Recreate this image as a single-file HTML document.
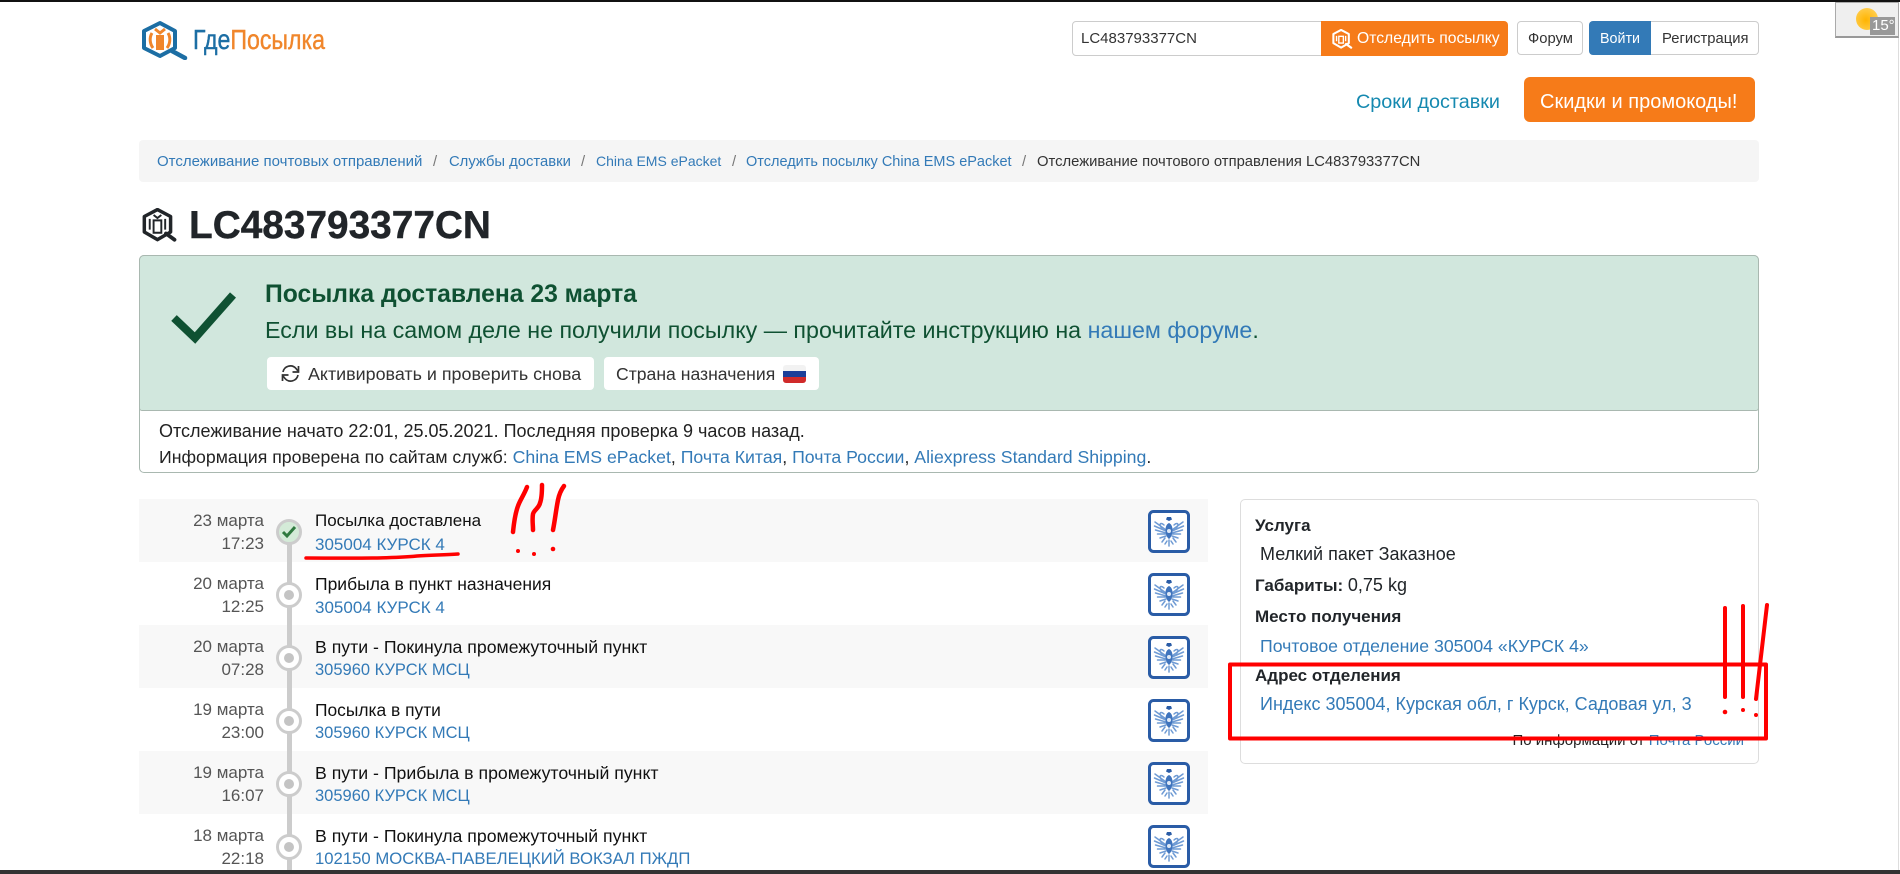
<!DOCTYPE html>
<html lang="ru"><head><meta charset="utf-8"><title>LC483793377CN</title>
<style>
html,body{margin:0;padding:0;background:#fff}
body{position:relative;width:1900px;height:874px;overflow:hidden;font-family:"Liberation Sans",Arial,sans-serif;color:#212529;font-size:17px}
a{color:#337ab7;text-decoration:none}
.t{position:absolute;white-space:nowrap;line-height:20px}
.b{position:absolute;box-sizing:border-box}
.row{position:absolute;left:139px;width:1069px;height:63px}
.d{position:absolute;left:144px;white-space:nowrap;line-height:20px;color:#555;width:120px;text-align:right}
.c{position:absolute;left:276px;width:26px;height:26px;box-sizing:border-box;border:3px solid #ccc;border-radius:50%;background:#fff}
.c i{position:absolute;left:5px;top:5px;width:10px;height:10px;border-radius:50%;background:#c4c4c4}
.eg{position:absolute;left:1148px;width:42px;height:43px}
.bc{font-size:14.8px}
.k{color:#111;font-size:17.700px}
.r{font-size:18px}
.l2{font-size:16.500px}
</style></head><body>
<svg width="0" height="0" style="position:absolute"><defs>
<g id="eagle">
<rect x="1.500" y="1.500" width="39" height="40" rx="4" fill="#fff" stroke="#2a5ca6" stroke-width="3"/>
<g fill="none" stroke="#6f9bd4" stroke-width="1.500" stroke-linecap="round">
<path d="M18 20L7 12M18 21L6.500 16M18 23L7.500 20M18 24L9.500 24M18 26L12 28"/>
<path d="M24 20L35 12M24 21L35.500 16M24 23L34.500 20M24 24L32.500 24M24 26L30 28"/>
<path d="M16 15c-2-2-4-2-4 0l2 4M26 15c2-2 4-2 4 0l-2 4"/>
<path d="M17 28l-3 4M25 28l3 4M19 31l-2 3M23 31l2 3M21 30v6"/>
</g>
<path d="M19 7h4l1 2.500-3 1.500-3-1.500z" fill="#2a5ca6"/>
<path d="M21 13c-2.500 1-3.500 4-3.500 7 0 5 2 8 3.500 9 1.500-1 3.500-4 3.500-9 0-3-1-6-3.500-7z" fill="#3f74bd"/>
<circle cx="21" cy="21" r="2" fill="#dfe9f6"/>
</g>
<g id="box"><path d="M22 2l17 9v20l-17 10L5 31V11z" fill="none" stroke="currentColor" stroke-width="4.500" stroke-linejoin="round"/><path d="M33 33l11 8" stroke="currentColor" stroke-width="5" stroke-linecap="round"/></g>
</defs></svg>

<div class="b" style="left:0;top:0;width:1900px;height:2px;background:#111"></div>

<svg class="b" style="left:139px;top:20px" width="50" height="40" viewBox="0 0 50 40">
<path d="M21 3l15 8v17l-15 8-16-8V11z" fill="none" stroke="#1c6ea4" stroke-width="4" stroke-linejoin="round"/>
<path d="M33 31l13 7" stroke="#1c6ea4" stroke-width="4.500" stroke-linecap="round"/>
<path d="M17 15h8v15h-8z" fill="#f0862b"/><path d="M13 13c-3 5-2 11 1 15M29 13c3 5 2 11-1 15M16 9l5 4 5-4" fill="none" stroke="#f0862b" stroke-width="3"/>
</svg>
<svg class="b" style="left:190px;top:22px" width="140" height="36"><text x="3" y="27" font-size="28" textLength="132" lengthAdjust="spacingAndGlyphs" font-family="Liberation Sans, sans-serif" fill="#1c6ea4" stroke="#1c6ea4" stroke-width=".4">Где<tspan fill="#f0862b" stroke="#f0862b">Посылка</tspan></text></svg>

<div class="b" style="left:1072px;top:21px;width:252px;height:35px;border:1px solid #ccc;border-radius:4px 0 0 4px"></div>
<div class="t" style="left:1081px;top:29px;font-size:15px;color:#333">LC483793377CN</div>
<div class="b" style="left:1321px;top:21px;width:187px;height:35px;background:#f67b19;border-radius:0 4px 4px 0"></div>
<svg class="b" style="left:1331px;top:29px;color:#fff" width="22" height="20" viewBox="0 0 48 44"><use href="#box"/><path d="M17 16h10v15H17zM12 15v12M32 15v12" fill="none" stroke="#fff" stroke-width="3"/></svg>
<div class="t" style="left:1357px;top:29px;font-size:15.700px;color:#fff">Отследить посылку</div>
<div class="b" style="left:1517px;top:21px;width:66px;height:34px;border:1px solid #ccc;border-radius:4px"></div>
<div class="t" style="left:1528px;top:29px;font-size:14.800px;color:#333">Форум</div>
<div class="b" style="left:1589px;top:21px;width:62px;height:34px;background:#337ab7;border-radius:4px 0 0 4px"></div>
<div class="t" style="left:1600px;top:29px;font-size:14.300px;color:#fff">Войти</div>
<div class="b" style="left:1651px;top:21px;width:108px;height:34px;border:1px solid #ccc;border-left:0;border-radius:0 4px 4px 0"></div>
<div class="t" style="left:1662px;top:29px;font-size:14.800px;color:#333">Регистрация</div>

<div class="t" style="left:1356px;top:92px;font-size:19.800px;color:#1589b0">Сроки доставки</div>
<div class="b" style="left:1524px;top:77px;width:231px;height:45px;background:#f67b19;border-radius:6px"></div>
<div class="t" style="left:1540px;top:92px;font-size:20px;color:#fff">Скидки и промокоды!</div>

<div class="b" style="left:1835px;top:2px;width:64px;height:36px;background:#efefef;border:1px solid #aaa;border-bottom:2px solid #999"></div>
<div class="b" style="left:1856px;top:8px;width:22px;height:22px;border-radius:50%;background:radial-gradient(circle at 45% 55%,#ffb400,#ffd66a)"></div>
<div class="b" style="left:1870px;top:17px;width:25px;height:18px;background:#999"></div>
<div class="t" style="left:1872px;top:16px;font-size:15px;color:#fff">15°</div>
<div class="b" style="left:1898px;top:38px;width:1px;height:832px;background:#ddd"></div>

<div class="b" style="left:139px;top:140px;width:1620px;height:42px;background:#f5f5f5;border-radius:4px"></div>
<a class="t bc" style="left:157px;top:152px;font-size:15px" href="#">Отслеживание почтовых отправлений</a>
<div class="t bc" style="left:433px;top:152px;color:#777">/</div>
<a class="t bc" style="left:449px;top:152px" href="#">Службы доставки</a>
<div class="t bc" style="left:581px;top:152px;color:#777">/</div>
<a class="t bc" style="left:596px;top:151px;font-size:14px" href="#">China EMS ePacket</a>
<div class="t bc" style="left:732px;top:152px;color:#777">/</div>
<a class="t bc" style="left:746px;top:152px;font-size:14.500px" href="#">Отследить посылку China EMS ePacket</a>
<div class="t bc" style="left:1022px;top:152px;color:#777">/</div>
<div class="t bc" style="left:1037px;top:152px;color:#333">Отслеживание почтового отправления LC483793377CN</div>

<svg class="b" style="left:138px;top:208px;color:#212529" width="42" height="34" viewBox="0 0 48 44"><use href="#box"/><path d="M17 16h10v16H17zM12 14v14M32 14v14M17 9l5 4 5-4" fill="none" stroke="#212529" stroke-width="2.500"/></svg>
<div class="t" style="left:189px;top:206px;line-height:40px;font-size:38.800px;font-weight:bold;-webkit-text-stroke:.4px #212529">LC483793377CN</div>

<div class="b" style="left:139px;top:255px;width:1620px;height:218px;border:1px solid #a9b8b0;border-radius:5px"></div>
<div class="b" style="left:139px;top:255px;width:1620px;height:156px;background:#d1e7dd;border:1px solid #a9b8b0;border-radius:5px 5px 3px 3px"></div>
<svg class="b" style="left:170px;top:290px" width="68" height="54" viewBox="0 0 68 54"><path d="M4 28l21 20L63 5" fill="none" stroke="#0f5132" stroke-width="8"/></svg>
<div class="t" style="left:265px;top:285px;font-size:24.700px;font-weight:bold;color:#0f5132">Посылка доставлена 23 марта</div>
<div class="t" style="left:265px;top:320px;font-size:23.250px;color:#0f5132">Если вы на самом деле не получили посылку — прочитайте инструкцию на <a href="#">нашем форуме</a>.</div>
<div class="b" style="left:267px;top:357px;width:327px;height:33px;background:#fff;border-radius:4px"></div>
<svg class="b" style="left:281px;top:364px" width="19" height="19" viewBox="0 0 19 19"><path d="M2 8A7.500 7.500 0 0 1 15 4.500L17 7M17 11A7.500 7.500 0 0 1 4 14.500L2 12" fill="none" stroke="#333" stroke-width="1.700"/><path d="M17.500 2v6h-6M1.500 17v-6h6" fill="none" stroke="#333" stroke-width="1.700"/></svg>
<div class="t" style="left:308px;top:364px;font-size:17.900px;color:#333">Активировать и проверить снова</div>
<div class="b" style="left:604px;top:357px;width:215px;height:33px;background:#fff;border-radius:4px"></div>
<div class="t" style="left:616px;top:364px;font-size:17.600px;color:#333">Страна назначения</div>
<div class="b" style="left:783px;top:365px;width:23px;height:18px;border-radius:3px;overflow:hidden;background:linear-gradient(#f2f2f2 0 33%,#1c3f99 33% 66%,#d02a2a 66%)"></div>
<div class="t" style="left:159px;top:421px;color:#222;font-size:18px">Отслеживание начато 22:01, 25.05.2021. Последняя проверка 9 часов назад.</div>
<div class="t" style="left:159px;top:447px;color:#222;font-size:17.700px">Информация проверена по сайтам служб: <a href="#">China EMS ePacket</a>, <a href="#">Почта Китая</a>, <a href="#">Почта России</a>, <a href="#">Aliexpress Standard Shipping</a>.</div>

<div class="row" style="top:499px;background:#f8f8f8"></div>
<div class="row" style="top:625px;background:#f8f8f8"></div>
<div class="row" style="top:751px;background:#f8f8f8"></div>
<div class="b" style="left:287px;top:530px;width:5px;height:340px;background:#ccc"></div>

<div class="d" style="top:511px">23 марта</div><div class="d" style="top:534px">17:23</div>
<div class="c" style="top:519px;background:#d4ebd8"></div>
<svg class="b" style="left:281px;top:525px" width="16" height="14" viewBox="0 0 16 14"><path d="M2 7l4 4 8-9" fill="none" stroke="#2f7a3f" stroke-width="3"/></svg>
<div class="t k" style="left:315px;top:511px;font-size:17px">Посылка доставлена</div><a class="t" href="#" style="left:315px;top:535px">305004 КУРСК 4</a>
<svg class="eg" style="top:510px"><use href="#eagle"/></svg>

<div class="d" style="top:574px">20 марта</div><div class="d" style="top:597px">12:25</div>
<div class="c" style="top:582px"><i></i></div>
<div class="t k" style="left:315px;top:574px;font-size:17.500px">Прибыла в пункт назначения</div><a class="t" href="#" style="left:315px;top:598px">305004 КУРСК 4</a>
<svg class="eg" style="top:573px"><use href="#eagle"/></svg>

<div class="d" style="top:637px">20 марта</div><div class="d" style="top:660px">07:28</div>
<div class="c" style="top:645px"><i></i></div>
<div class="t k" style="left:315px;top:637px">В пути - Покинула промежуточный пункт</div><a class="t l2" href="#" style="left:315px;top:660px">305960 КУРСК МСЦ</a>
<svg class="eg" style="top:636px"><use href="#eagle"/></svg>

<div class="d" style="top:700px">19 марта</div><div class="d" style="top:723px">23:00</div>
<div class="c" style="top:708px"><i></i></div>
<div class="t k" style="left:315px;top:700px;font-size:17.400px">Посылка в пути</div><a class="t l2" href="#" style="left:315px;top:723px">305960 КУРСК МСЦ</a>
<svg class="eg" style="top:699px"><use href="#eagle"/></svg>

<div class="d" style="top:763px">19 марта</div><div class="d" style="top:786px">16:07</div>
<div class="c" style="top:771px"><i></i></div>
<div class="t k" style="left:315px;top:763px">В пути - Прибыла в промежуточный пункт</div><a class="t l2" href="#" style="left:315px;top:786px">305960 КУРСК МСЦ</a>
<svg class="eg" style="top:762px"><use href="#eagle"/></svg>

<div class="d" style="top:826px">18 марта</div><div class="d" style="top:849px">22:18</div>
<div class="c" style="top:834px"><i></i></div>
<div class="t k" style="left:315px;top:826px">В пути - Покинула промежуточный пункт</div><a class="t" href="#" style="left:315px;top:849px;font-size:16.700px">102150 МОСКВА-ПАВЕЛЕЦКИЙ ВОКЗАЛ ПЖДП</a>
<svg class="eg" style="top:825px"><use href="#eagle"/></svg>

<div class="b" style="left:1240px;top:499px;width:519px;height:265px;border:1px solid #ddd;border-radius:5px"></div>
<div class="t" style="left:1255px;top:516px"><b>Услуга</b></div>
<div class="t r" style="left:1260px;top:544px">Мелкий пакет Заказное</div>
<div class="t" style="left:1255px;top:575px"><b>Габариты:</b> <span class="r">0,75 kg</span></div>
<div class="t" style="left:1255px;top:607px"><b>Место получения</b></div>
<a class="t" href="#" style="left:1260px;top:636px;font-size:17.700px">Почтовое отделение 305004 «КУРСК 4»</a>
<div class="t" style="left:1255px;top:666px"><b>Адрес отделения</b></div>
<a class="t r" href="#" style="left:1260px;top:694px">Индекс 305004, Курская обл, г Курск, Садовая ул, 3</a>
<div class="t" style="right:156px;top:731px;font-size:15px;color:#222">По информации от <a href="#">Почта России</a></div>

<svg class="b" style="left:0;top:0;pointer-events:none" width="1900" height="874" fill="none" stroke="#f00" stroke-linecap="round" stroke-linejoin="round">
<rect x="1230" y="664.500" width="536" height="74" stroke-width="4" stroke-linecap="butt"/>
<path d="M1725 608v89M1743 606v91M1767 605l-11 94" stroke-width="4"/>
<path d="M306 558c30 0 80 1 111-2 15-1 28-1 41-2" stroke-width="3.500"/>
<path d="M527 487c-3 8-7 13-9 19-3 8-4 16-5 26M542 485c0 6 0 13-2 18-1 5-6 7-7 11-1 5 0 11 0 16M564 486c-3 4-5 9-6 14-2 10-3 20-5 30" stroke-width="4.500"/>
<g fill="#f00" stroke="none"><circle cx="518" cy="551" r="2"/><circle cx="534" cy="554" r="2"/><circle cx="553" cy="549" r="2.300"/><circle cx="1725" cy="712" r="2.300"/><circle cx="1743" cy="710" r="2"/><circle cx="1756" cy="715" r="2"/></g>
</svg>

<div class="b" style="left:0;top:870px;width:1900px;height:4px;background:#333"></div>
</body></html>
